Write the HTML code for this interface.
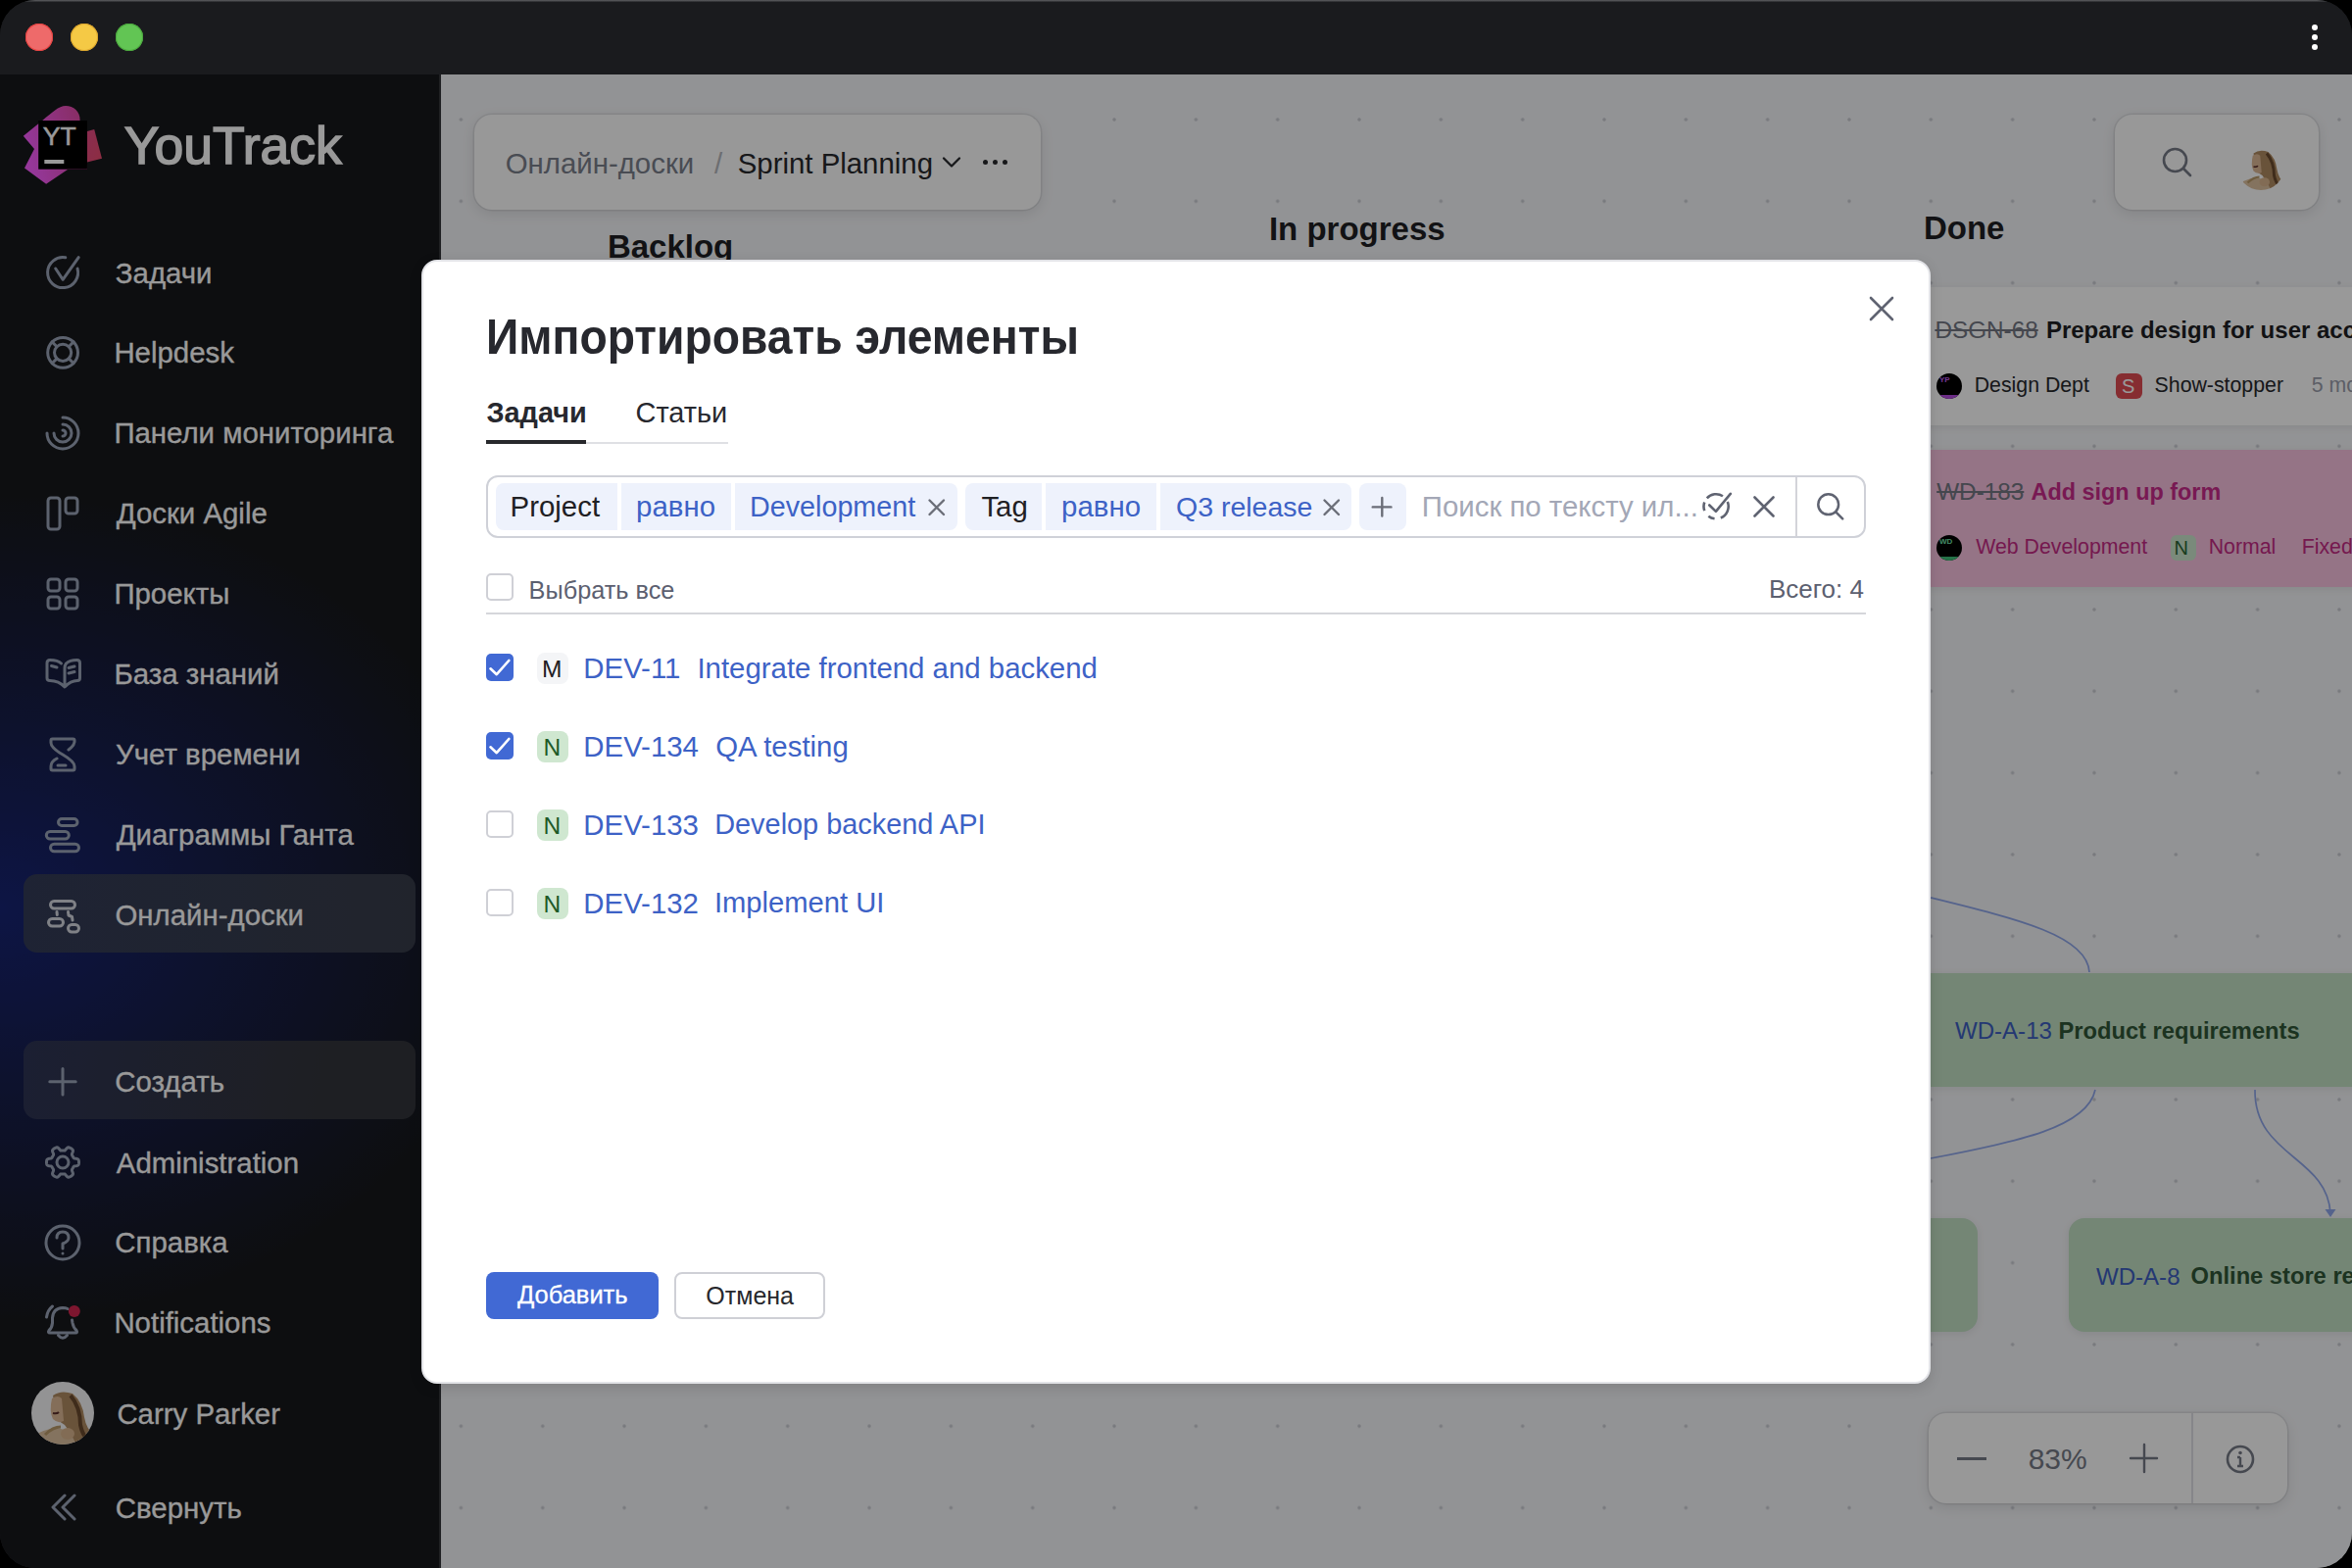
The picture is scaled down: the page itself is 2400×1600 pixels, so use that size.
<!DOCTYPE html>
<html><head><meta charset="utf-8"><style>
html,body{margin:0;padding:0;}
body{width:2400px;height:1600px;overflow:hidden;background:#000;position:relative;font-family:"Liberation Sans",sans-serif;}
.t{position:absolute;white-space:nowrap;line-height:1;}
.b{position:absolute;box-sizing:border-box;}
</style></head><body>
<div style="position:absolute;left:0;top:0;width:2400px;height:1600px;border-radius:36px;overflow:hidden;background:#1a1b1e;">
<div class="b" style="left:0px;top:0px;width:2400px;height:76px;background:#1a1b1e;"></div>
<div class="b" style="left:0px;top:0px;width:2400px;height:2px;background:linear-gradient(#606164,#26272a);"></div>
<div class="b" style="left:26px;top:24px;width:28px;height:28px;border-radius:50%;background:#ee6a6a;box-shadow:inset 0 0 0 1px #e8403f;"></div>
<div class="b" style="left:72px;top:24px;width:28px;height:28px;border-radius:50%;background:#f5c945;box-shadow:inset 0 0 0 1px #dca52c;"></div>
<div class="b" style="left:118px;top:24px;width:28px;height:28px;border-radius:50%;background:#62c554;box-shadow:inset 0 0 0 1px #4aa83d;"></div>
<div class="b" style="left:2359px;top:25px;width:6px;height:6px;border-radius:50%;background:#fff;"></div>
<div class="b" style="left:2359px;top:35px;width:6px;height:6px;border-radius:50%;background:#fff;"></div>
<div class="b" style="left:2359px;top:45px;width:6px;height:6px;border-radius:50%;background:#fff;"></div>
<div class="b" style="left:0px;top:76px;width:448px;height:1524px;background:#17181c;"></div>
<div class="b" style="left:0px;top:76px;width:448px;height:1524px;background:radial-gradient(ellipse 520px 420px at 0px 850px, rgba(22,36,120,0.95), rgba(22,36,120,0.5) 45%, rgba(22,36,120,0) 100%);"></div>
<div class="b" style="left:448px;top:76px;width:2px;height:1524px;background:#35363b;"></div>
<svg class="b" style="left:20px;top:100px;" width="90" height="95" viewBox="0 0 90 95" fill="none">
<defs><linearGradient id="lg1" x1="0" y1="0.3" x2="1" y2="0"><stop offset="0" stop-color="#f85cff"/><stop offset="1" stop-color="#e04a9a"/></linearGradient>
<linearGradient id="lg2" x1="0" y1="0" x2="1" y2="1"><stop offset="0" stop-color="#e64a86"/><stop offset="1" stop-color="#ea4c6e"/></linearGradient></defs>
<path d="M3.8 38.8 L23.5 22.7 C33 15 40 8 47 8 C55 8 62 14 61.6 22.7 L68.9 73 L49 73 L27.1 87.8 L5 71.5 L15 52 Z" fill="url(#lg1)"/>
<path d="M68.9 33.9 L76.2 32.1 L84 61.8 L68.9 65.4 Z" fill="url(#lg2)"/>
<rect x="19.2" y="23" width="49.7" height="49.7" fill="#000"/>
<rect x="25.3" y="63" width="20" height="4" fill="#fff"/>
</svg>
<div class="t" style="left:43.8px;top:125.6px;font-size:26.5px;font-weight:normal;color:#fff;-webkit-text-stroke:0.5px #fff;">YT</div>
<div class="t" style="left:126.7px;top:121.7px;font-size:53.5px;font-weight:normal;color:#fff;-webkit-text-stroke:1.5px #fff;">YouTrack</div>
<div class="b" style="left:24px;top:892px;width:400px;height:80px;background:linear-gradient(90deg,#333b57,#383d4a);border-radius:14px;"></div>
<div class="b" style="left:24px;top:1062px;width:400px;height:80px;background:linear-gradient(100deg,#2e3455,#33353b 75%);border-radius:14px;"></div>
<div class="t" style="left:117.8px;top:263.5px;font-size:29.4px;font-weight:normal;color:#ffffff;-webkit-text-stroke:0.3px #fff;">Задачи</div>
<div class="t" style="left:116.4px;top:345.1px;font-size:29.4px;font-weight:normal;color:#ffffff;-webkit-text-stroke:0.3px #fff;">Helpdesk</div>
<div class="t" style="left:116.4px;top:427.1px;font-size:29.4px;font-weight:normal;color:#ffffff;-webkit-text-stroke:0.3px #fff;">Панели мониторинга</div>
<div class="t" style="left:118.7px;top:509.1px;font-size:29.4px;font-weight:normal;color:#ffffff;-webkit-text-stroke:0.3px #fff;">Доски Agile</div>
<div class="t" style="left:116.4px;top:591.1px;font-size:29.4px;font-weight:normal;color:#ffffff;-webkit-text-stroke:0.3px #fff;">Проекты</div>
<div class="t" style="left:116.4px;top:673.1px;font-size:29.4px;font-weight:normal;color:#ffffff;-webkit-text-stroke:0.3px #fff;">База знаний</div>
<div class="t" style="left:118.1px;top:755.1px;font-size:29.4px;font-weight:normal;color:#ffffff;-webkit-text-stroke:0.3px #fff;">Учет времени</div>
<div class="t" style="left:118.7px;top:837.1px;font-size:29.4px;font-weight:normal;color:#ffffff;-webkit-text-stroke:0.3px #fff;">Диаграммы Ганта</div>
<div class="t" style="left:117.5px;top:919.1px;font-size:29.4px;font-weight:normal;color:#ffffff;-webkit-text-stroke:0.3px #fff;">Онлайн-доски</div>
<div class="t" style="left:117.3px;top:1089.1px;font-size:29.4px;font-weight:normal;color:#ffffff;-webkit-text-stroke:0.3px #fff;">Создать</div>
<div class="t" style="left:118.8px;top:1171.7px;font-size:29.4px;font-weight:normal;color:#ffffff;-webkit-text-stroke:0.3px #fff;">Administration</div>
<div class="t" style="left:117.3px;top:1253.1px;font-size:29.4px;font-weight:normal;color:#ffffff;-webkit-text-stroke:0.3px #fff;">Справка</div>
<div class="t" style="left:116.4px;top:1335.1px;font-size:29.4px;font-weight:normal;color:#ffffff;-webkit-text-stroke:0.3px #fff;">Notifications</div>
<div class="t" style="left:119.4px;top:1428.1px;font-size:29.4px;font-weight:normal;color:#ffffff;-webkit-text-stroke:0.3px #fff;">Carry Parker</div>
<div class="t" style="left:117.8px;top:1523.8px;font-size:29.4px;font-weight:normal;color:#ffffff;-webkit-text-stroke:0.3px #fff;">Свернуть</div>
<svg class="b" style="left:32px;top:1410px" width="64" height="64" viewBox="0 0 64 64"><defs><clipPath id="av1"><circle cx="32" cy="32" r="32"/></clipPath></defs>
<g clip-path="url(#av1)">
<rect x="0" y="0" width="64" height="64" fill="#f6f6f7"/>
<path d="M8 52 Q20 46 30 48 Q40 50 50 56 L58 64 L6 64 Z" fill="#dcc09e"/>
<path d="M22 14 Q30 8 42 12 Q52 20 54 36 Q56 48 64 54 L64 64 L46 64 Q40 52 34 44 L28 40 Q24 28 22 14 Z" fill="#b08a62"/>
<path d="M40 14 Q50 26 50 44 Q52 54 58 60" stroke="#6a4a2e" stroke-width="4" fill="none"/>
<path d="M21 17 Q27 13 31 17 L33 40 Q27 43 22 38 Q18 30 21 17 Z" fill="#dcb894"/>
<path d="M14 54 Q22 46 30 46" stroke="#b99a6a" stroke-width="3" fill="none"/>
<ellipse cx="37" cy="53" rx="7" ry="6" fill="#d9b58e"/>
<path d="M22 32 Q26 33 28 31" stroke="#5a2e2a" stroke-width="2" fill="none"/>
</g></svg>
<svg class="b" style="left:44px;top:258px;" width="40" height="40" viewBox="0 0 40 40" fill="none"><path d="M35.07 16.09 A15.5 15.5 0 1 1 22.79 4.84" stroke="#9aa4b8" stroke-width="3" stroke-linecap="round" stroke-linejoin="round"/><path d="M12.7 16 L20.1 27.3 L36.2 4.7" stroke="#9aa4b8" stroke-width="3" stroke-linecap="round" stroke-linejoin="round"/></svg>
<svg class="b" style="left:44px;top:340px;" width="40" height="40" viewBox="0 0 40 40" fill="none"><circle cx="20.1" cy="19.8" r="15.4" stroke="#9aa4b8" stroke-width="3" stroke-linecap="round" stroke-linejoin="round"/><circle cx="20.1" cy="19.8" r="8.6" stroke="#9aa4b8" stroke-width="3" stroke-linecap="round" stroke-linejoin="round"/><path d="M9.2 8.9 L14 13.7 M31 8.9 L26.2 13.7 M9.2 30.7 L14 25.9 M31 30.7 L26.2 25.9" stroke="#9aa4b8" stroke-width="3" stroke-linecap="round" stroke-linejoin="round"/></svg>
<svg class="b" style="left:44px;top:422px;" width="40" height="40" viewBox="0 0 40 40" fill="none"><path d="M20 4 A16 16 0 1 1 4 20" stroke="#9aa4b8" stroke-width="3" stroke-linecap="round" stroke-linejoin="round"/><path d="M20 11 A9 9 0 1 1 11 20" stroke="#9aa4b8" stroke-width="3" stroke-linecap="round" stroke-linejoin="round"/><path d="M20 17 A3 3 0 0 1 20 23" stroke="#9aa4b8" stroke-width="3" stroke-linecap="round" stroke-linejoin="round"/></svg>
<svg class="b" style="left:44px;top:504px;" width="40" height="40" viewBox="0 0 40 40" fill="none"><rect x="5" y="4" width="12" height="32" rx="3" stroke="#9aa4b8" stroke-width="3" stroke-linecap="round" stroke-linejoin="round"/><rect x="23" y="4" width="12" height="16" rx="3" stroke="#9aa4b8" stroke-width="3" stroke-linecap="round" stroke-linejoin="round"/></svg>
<svg class="b" style="left:44px;top:586px;" width="40" height="40" viewBox="0 0 40 40" fill="none"><rect x="5" y="5" width="12" height="12" rx="3" stroke="#9aa4b8" stroke-width="3" stroke-linecap="round" stroke-linejoin="round"/><rect x="23" y="5" width="12" height="12" rx="3" stroke="#9aa4b8" stroke-width="3" stroke-linecap="round" stroke-linejoin="round"/><rect x="5" y="23" width="12" height="12" rx="3" stroke="#9aa4b8" stroke-width="3" stroke-linecap="round" stroke-linejoin="round"/><rect x="23" y="23" width="12" height="12" rx="3" stroke="#9aa4b8" stroke-width="3" stroke-linecap="round" stroke-linejoin="round"/></svg>
<svg class="b" style="left:44px;top:668px;" width="40" height="40" viewBox="0 0 40 40" fill="none"><path d="M18.5 9 Q15 5.5 7 5.5 Q4 5.5 4 8.5 L4 24 Q4 26.5 7 26.5 Q16 26.5 22 33 Q28 26.5 35 26.5 Q37.5 26.5 37.5 24 L37.5 8.5 Q37.5 5.5 34.5 5.5 Q27 5.5 23.5 9 Q22 11 22 14 L22 32" stroke="#9aa4b8" stroke-width="3" stroke-linecap="round" stroke-linejoin="round"/><path d="M8.5 11.5 L14 13 M26 13.5 L32 12 M26 19 L32 17.5" stroke="#9aa4b8" stroke-width="3" stroke-linecap="round" stroke-linejoin="round"/></svg>
<svg class="b" style="left:44px;top:750px;" width="40" height="40" viewBox="0 0 40 40" fill="none"><path d="M26 15 Q31.5 11 32 7 L32 5.5 Q32 4 30.5 4 L9.5 4 Q8 4 8 5.5 L8 8 Q8 13 20 20 Q32 27 32 32 L32 34.5 Q32 36 30.5 36 L9.5 36 Q8 36 8 34.5 L8 32 Q8 27 14 24" stroke="#9aa4b8" stroke-width="3" stroke-linecap="round" stroke-linejoin="round"/><path d="M15 31 L23 31" stroke="#9aa4b8" stroke-width="3" stroke-linecap="round" stroke-linejoin="round"/></svg>
<svg class="b" style="left:44px;top:832px;" width="40" height="40" viewBox="0 0 40 40" fill="none"><rect x="15.5" y="3.5" width="19.5" height="7" rx="3.5" stroke="#9aa4b8" stroke-width="3" stroke-linecap="round" stroke-linejoin="round"/><rect x="3.3" y="16.5" width="23" height="7.5" rx="3.75" stroke="#9aa4b8" stroke-width="3" stroke-linecap="round" stroke-linejoin="round"/><rect x="7.5" y="29.3" width="29" height="7.5" rx="3.75" stroke="#9aa4b8" stroke-width="3" stroke-linecap="round" stroke-linejoin="round"/></svg>
<svg class="b" style="left:44px;top:914px;" width="40" height="40" viewBox="0 0 40 40" fill="none"><rect x="7.5" y="5.5" width="25" height="7.5" rx="3.75" stroke="#d4d8e0" stroke-width="3" stroke-linecap="round" stroke-linejoin="round"/><rect x="5.5" y="23.5" width="15" height="7.5" rx="3.75" stroke="#d4d8e0" stroke-width="3" stroke-linecap="round" stroke-linejoin="round"/><rect x="25.5" y="29.5" width="11" height="7.5" rx="3.75" stroke="#d4d8e0" stroke-width="3" stroke-linecap="round" stroke-linejoin="round"/><path d="M14 16.5 L14.3 19.5 M25.5 16.5 L26 20 L29.5 21.5 L30 25" stroke="#d4d8e0" stroke-width="3" stroke-linecap="round" stroke-linejoin="round"/></svg>
<svg class="b" style="left:44px;top:1084px;" width="40" height="40" viewBox="0 0 40 40" fill="none"><path d="M20 6.5 L20 33 M6.8 19.8 L33.2 19.8" stroke="#9aa4b8" stroke-width="3" stroke-linecap="round" stroke-linejoin="round"/></svg>
<svg class="b" style="left:44px;top:1166px;" width="40" height="40" viewBox="0 0 40 40" fill="none"><path d="M20.00 8.10 L20.52 8.11 L21.04 8.12 L21.57 8.10 L22.12 7.96 L22.79 7.43 L23.68 6.28 L24.67 5.19 L25.53 4.80 L26.28 4.85 L26.96 5.07 L27.62 5.37 L28.25 5.71 L28.86 6.09 L29.45 6.51 L29.98 6.99 L30.40 7.61 L30.49 8.55 L30.04 9.96 L29.49 11.30 L29.36 12.14 L29.52 12.69 L29.77 13.16 L30.04 13.60 L30.31 14.05 L30.56 14.50 L30.81 14.96 L31.09 15.41 L31.49 15.82 L32.28 16.13 L33.72 16.32 L35.16 16.64 L35.93 17.19 L36.26 17.86 L36.41 18.56 L36.48 19.28 L36.50 20.00 L36.48 20.72 L36.41 21.44 L36.26 22.14 L35.93 22.81 L35.16 23.36 L33.72 23.68 L32.28 23.87 L31.49 24.18 L31.09 24.59 L30.81 25.04 L30.56 25.50 L30.31 25.95 L30.04 26.40 L29.77 26.84 L29.52 27.31 L29.36 27.86 L29.49 28.70 L30.04 30.04 L30.49 31.45 L30.40 32.39 L29.98 33.01 L29.45 33.49 L28.86 33.91 L28.25 34.29 L27.62 34.63 L26.96 34.93 L26.28 35.15 L25.53 35.20 L24.67 34.81 L23.68 33.72 L22.79 32.57 L22.12 32.04 L21.57 31.90 L21.04 31.88 L20.52 31.89 L20.00 31.90 L19.48 31.89 L18.96 31.88 L18.43 31.90 L17.88 32.04 L17.21 32.57 L16.32 33.72 L15.33 34.81 L14.47 35.20 L13.72 35.15 L13.04 34.93 L12.38 34.63 L11.75 34.29 L11.14 33.91 L10.55 33.49 L10.02 33.01 L9.60 32.39 L9.51 31.45 L9.96 30.04 L10.51 28.70 L10.64 27.86 L10.48 27.31 L10.23 26.84 L9.96 26.40 L9.69 25.95 L9.44 25.50 L9.19 25.04 L8.91 24.59 L8.51 24.18 L7.72 23.87 L6.28 23.68 L4.84 23.36 L4.07 22.81 L3.74 22.14 L3.59 21.44 L3.52 20.72 L3.50 20.00 L3.52 19.28 L3.59 18.56 L3.74 17.86 L4.07 17.19 L4.84 16.64 L6.28 16.32 L7.72 16.13 L8.51 15.82 L8.91 15.41 L9.19 14.96 L9.44 14.50 L9.69 14.05 L9.96 13.60 L10.23 13.16 L10.48 12.69 L10.64 12.14 L10.51 11.30 L9.96 9.96 L9.51 8.55 L9.60 7.61 L10.02 6.99 L10.55 6.51 L11.14 6.09 L11.75 5.71 L12.38 5.37 L13.04 5.07 L13.72 4.85 L14.47 4.80 L15.33 5.19 L16.32 6.28 L17.21 7.43 L17.88 7.96 L18.43 8.10 L18.96 8.12 L19.48 8.11 L20.00 8.10 Z" stroke="#9aa4b8" stroke-width="3" stroke-linecap="round" stroke-linejoin="round"/><circle cx="20" cy="20" r="6" stroke="#9aa4b8" stroke-width="3" stroke-linecap="round" stroke-linejoin="round"/></svg>
<svg class="b" style="left:44px;top:1248px;" width="40" height="40" viewBox="0 0 40 40" fill="none"><circle cx="20" cy="20" r="17" stroke="#9aa4b8" stroke-width="3" stroke-linecap="round" stroke-linejoin="round"/><path d="M14 15 Q14 9 20 9 Q26 9 26 15 Q26 19 20 21 L20 26" stroke="#9aa4b8" stroke-width="3" stroke-linecap="round" stroke-linejoin="round"/><circle cx="20" cy="31" r="1.5" fill="#9aa4b8"/></svg>
<svg class="b" style="left:44px;top:1330px;" width="40" height="40" viewBox="0 0 40 40" fill="none"><path d="M9.5 15 Q10 5 20 4.5 Q23 4.5 25 5.5" stroke="#9aa4b8" stroke-width="3" stroke-linecap="round" stroke-linejoin="round"/><path d="M29.5 17 L30 20 Q31 25 34 27.5 Q35.5 30 33 30 L7 30 Q4.5 30 6 27.5 Q9 25 9.5 20 L9.5 15" stroke="#9aa4b8" stroke-width="3" stroke-linecap="round" stroke-linejoin="round"/><path d="M15.5 32.5 Q20 38 24.5 32.5" stroke="#9aa4b8" stroke-width="3" stroke-linecap="round" stroke-linejoin="round"/><path d="M3.5 14 Q4.5 7 9.5 3" stroke="#9aa4b8" stroke-width="3" stroke-linecap="round" stroke-linejoin="round"/><circle cx="31.8" cy="8" r="6" fill="#d1264f"/></svg>
<svg class="b" style="left:44px;top:1518px;" width="40" height="40" viewBox="0 0 40 40" fill="none"><path d="M22 8 L10 20 L22 32 M32 8 L20 20 L32 32" stroke="#9aa4b8" stroke-width="3" stroke-linecap="round" stroke-linejoin="round"/></svg>
<div class="b" style="left:450px;top:76px;width:1950px;height:1524px;background-color:#f4f5f8;background-image:radial-gradient(circle, #c9cbd2 1.2px, transparent 2.2px);background-size:83.333px 83.333px;background-position:-21.27px 4.33px;"></div>
<div class="b" style="left:484px;top:117px;width:578px;height:97px;background:#fdfdfe;border-radius:18px;box-shadow:0 4px 14px rgba(0,0,0,0.10), 0 0 0 1.5px rgba(0,0,0,0.07);"></div>
<div class="t" style="left:515.7px;top:151.9px;font-size:29.4px;font-weight:normal;color:#7a7f8b;">Онлайн-доски</div>
<div class="t" style="left:729.0px;top:151.9px;font-size:29.4px;font-weight:normal;color:#b5b7bc;">/</div>
<div class="t" style="left:752.7px;top:151.9px;font-size:29.4px;font-weight:normal;color:#27282c;">Sprint Planning</div>
<svg class="b" style="left:958px;top:155px;" width="26" height="20" viewBox="0 0 26 20" fill="none"><path d="M5 6.5 L13 14.5 L21 6.5" stroke="#27282c" stroke-width="2.3" stroke-linecap="round" stroke-linejoin="round"/></svg>
<div class="b" style="left:1002.9px;top:163px;width:5.2px;height:5.2px;border-radius:50%;background:#27282c;"></div>
<div class="b" style="left:1012.9px;top:163px;width:5.2px;height:5.2px;border-radius:50%;background:#27282c;"></div>
<div class="b" style="left:1022.9px;top:163px;width:5.2px;height:5.2px;border-radius:50%;background:#27282c;"></div>
<div class="b" style="left:2158px;top:117px;width:208px;height:97px;background:#fdfdfe;border-radius:18px;box-shadow:0 4px 14px rgba(0,0,0,0.10), 0 0 0 1.5px rgba(0,0,0,0.07);"></div>
<svg class="b" style="left:2200px;top:145px;" width="44" height="44" viewBox="0 0 44 44" fill="none"><circle cx="19.5" cy="18.5" r="11.5" stroke="#767a86" stroke-width="2.6"/><path d="M28 27 L35 34" stroke="#767a86" stroke-width="2.6" stroke-linecap="round"/></svg>
<svg class="b" style="left:2283px;top:146px" width="48" height="48" viewBox="0 0 64 64"><defs><clipPath id="av2"><circle cx="32" cy="32" r="32"/></clipPath></defs>
<g clip-path="url(#av2)">
<rect x="0" y="0" width="64" height="64" fill="#fdfdfe"/>
<path d="M8 52 Q20 46 30 48 Q40 50 50 56 L58 64 L6 64 Z" fill="#dcc09e"/>
<path d="M22 14 Q30 8 42 12 Q52 20 54 36 Q56 48 64 54 L64 64 L46 64 Q40 52 34 44 L28 40 Q24 28 22 14 Z" fill="#b08a62"/>
<path d="M40 14 Q50 26 50 44 Q52 54 58 60" stroke="#6a4a2e" stroke-width="4" fill="none"/>
<path d="M21 17 Q27 13 31 17 L33 40 Q27 43 22 38 Q18 30 21 17 Z" fill="#dcb894"/>
<path d="M14 54 Q22 46 30 46" stroke="#b99a6a" stroke-width="3" fill="none"/>
<ellipse cx="37" cy="53" rx="7" ry="6" fill="#d9b58e"/>
<path d="M22 32 Q26 33 28 31" stroke="#5a2e2a" stroke-width="2" fill="none"/>
</g></svg>
<div class="t" style="left:619.9px;top:235.1px;font-size:33px;font-weight:bold;color:#1e1f23;">Backlog</div>
<div class="t" style="left:1294.9px;top:217.1px;font-size:33px;font-weight:bold;color:#1e1f23;">In progress</div>
<div class="t" style="left:1962.9px;top:215.6px;font-size:33px;font-weight:bold;color:#1e1f23;">Done</div>
<div class="b" style="left:1940px;top:293px;width:520px;height:141px;background:#ffffff;border-radius:16px;box-shadow:0 2px 8px rgba(0,0,0,0.08);"></div>
<div class="t" style="left:1974.4px;top:324.9px;font-size:24.3px;font-weight:normal;color:#737783;text-decoration:line-through;">DSGN-68</div>
<div class="t" style="left:2087.9px;top:325.2px;font-size:24px;font-weight:bold;color:#1e1f23;">Prepare design for user account</div>
<div class="b" style="left:1976px;top:381px;width:26px;height:26px;border-radius:50%;background:#000;overflow:hidden;"><div class="b" style="left:0;top:22px;width:26px;height:4px;background:#b44be0"></div><div class="t" style="left:3px;top:3px;font-size:8px;font-weight:bold;color:#c05ef0;">YP</div></div>
<div class="t" style="left:2014.7px;top:383.4px;font-size:21.3px;font-weight:normal;color:#27282c;">Design Dept</div>
<div class="b" style="left:2159px;top:381px;width:27px;height:26px;background:#e04c52;border-radius:6px;"></div>
<div class="t" style="left:2165.1px;top:383.6px;font-size:20px;font-weight:normal;color:#fff;">S</div>
<div class="t" style="left:2198.6px;top:383.4px;font-size:21.3px;font-weight:normal;color:#27282c;">Show-stopper</div>
<div class="t" style="left:2358.8px;top:383.4px;font-size:21.3px;font-weight:normal;color:#9a9dab;">5 mo</div>
<div class="b" style="left:1940px;top:459px;width:520px;height:140px;background:#f8c2df;border-radius:16px;box-shadow:0 2px 8px rgba(0,0,0,0.08);"></div>
<div class="t" style="left:1976.2px;top:489.7px;font-size:24.3px;font-weight:normal;color:#737783;text-decoration:line-through;">WD-183</div>
<div class="t" style="left:2072.6px;top:490.5px;font-size:23.4px;font-weight:bold;color:#c92b8a;">Add sign up form</div>
<div class="b" style="left:1976px;top:546px;width:26px;height:26px;border-radius:50%;background:#000;overflow:hidden;"><div class="b" style="left:0;top:22px;width:26px;height:4px;background:#3fbf78"></div><div class="t" style="left:3px;top:3px;font-size:8px;font-weight:bold;color:#6fe0a8;">WD</div></div>
<div class="t" style="left:2016.3px;top:548.3px;font-size:21.3px;font-weight:normal;color:#c42a84;">Web Development</div>
<div class="b" style="left:2215px;top:546px;width:26px;height:26px;background:#cbe6cd;border-radius:6px;"></div>
<div class="t" style="left:2218.4px;top:548.6px;font-size:20px;font-weight:normal;color:#2b6434;">N</div>
<div class="t" style="left:2253.7px;top:548.3px;font-size:21.3px;font-weight:normal;color:#c42a84;">Normal</div>
<div class="t" style="left:2348.7px;top:548.3px;font-size:21.3px;font-weight:normal;color:#c42a84;">Fixed</div>
<div class="b" style="left:1940px;top:993px;width:520px;height:116px;background:#c1dfc4;border-radius:16px;box-shadow:0 2px 8px rgba(0,0,0,0.08);"></div>
<div class="t" style="left:1994.9px;top:1040.2px;font-size:24.1px;font-weight:normal;color:#3d5ec0;">WD-A-13</div>
<div class="t" style="left:2100.5px;top:1040.5px;font-size:23.7px;font-weight:bold;color:#2f5536;">Product requirements</div>
<div class="b" style="left:1900px;top:1243px;width:118px;height:116px;background:#c1dfc4;border-radius:16px;box-shadow:0 2px 8px rgba(0,0,0,0.08);"></div>
<div class="b" style="left:2111px;top:1243px;width:339px;height:116px;background:#c1dfc4;border-radius:16px;box-shadow:0 2px 8px rgba(0,0,0,0.08);"></div>
<div class="t" style="left:2138.9px;top:1290.6px;font-size:24.1px;font-weight:normal;color:#3d5ec0;">WD-A-8</div>
<div class="t" style="left:2235.6px;top:1290.9px;font-size:23.7px;font-weight:bold;color:#2f5536;">Online store requirements</div>
<svg class="b" style="left:1950px;top:880px;" width="450" height="380" viewBox="0 0 450 380" fill="none">
<path d="M20 36 C110 58 180 75 182 112" stroke="#8ea6ea" stroke-width="1.7"/>
<path d="M188 232 C180 270 110 285 20 302" stroke="#8ea6ea" stroke-width="1.7"/>
<path d="M351 232 C350 300 425 300 428 358" stroke="#8ea6ea" stroke-width="1.7"/>
<path d="M422.5 354 L428 362 L433.5 354 Z" fill="#8ea6ea"/>
</svg>
<div class="b" style="left:1968px;top:1442px;width:366px;height:92px;background:#fdfdfe;border-radius:18px;box-shadow:0 4px 14px rgba(0,0,0,0.10), 0 0 0 1.5px rgba(0,0,0,0.07);"></div>
<div class="b" style="left:2236px;top:1442px;width:2px;height:92px;background:#dfe0e4;"></div>
<div class="b" style="left:1997px;top:1487px;width:30px;height:2.5px;background:#767a86;"></div>
<div class="t" style="left:2069.7px;top:1473.6px;font-size:30px;font-weight:normal;color:#767a86;">83%</div>
<svg class="b" style="left:2170px;top:1470px;" width="36" height="36" viewBox="0 0 36 36" fill="none"><path d="M18 4 L18 32 M4 18 L31 18" stroke="#767a86" stroke-width="2.4" stroke-linecap="round"/></svg>
<svg class="b" style="left:2266px;top:1474px;" width="40" height="32" viewBox="0 0 40 32" fill="none"><circle cx="20" cy="15" r="13" stroke="#767a86" stroke-width="2.6"/><path d="M20 13 L20 22 M17 13 L20 13 M17 22 L23 22" stroke="#767a86" stroke-width="2.4"/><circle cx="20" cy="8.5" r="1.8" fill="#767a86"/></svg>
<div class="b" style="left:0px;top:76px;width:2400px;height:1524px;background:rgba(0,0,0,0.4);"></div>
<div class="b" style="left:430px;top:265px;width:1540px;height:1147px;background:#fff;border:2px solid #e3e4e8;border-radius:16px;box-shadow:0 4px 14px rgba(0,0,0,0.12);"></div>
<svg class="b" style="left:1905px;top:300px;" width="30" height="30" viewBox="0 0 30 30" fill="none"><path d="M4 4 L26 26 M26 4 L4 26" stroke="#5f6371" stroke-width="2.6" stroke-linecap="round"/></svg>
<div class="t" style="left:496.0px;top:318.7px;font-size:50.2px;font-weight:bold;color:#27282e;transform:scaleX(0.922);transform-origin:0 0;">Импортировать элементы</div>
<div class="t" style="left:496.4px;top:406.8px;font-size:28.9px;font-weight:bold;color:#27282e;">Задачи</div>
<div class="t" style="left:648.6px;top:406.8px;font-size:28.9px;font-weight:normal;color:#27282e;">Статьи</div>
<div class="b" style="left:598px;top:451px;width:145px;height:2px;background:#dfe0e4;"></div>
<div class="b" style="left:496px;top:449px;width:102px;height:4px;background:#27282c;"></div>
<div class="b" style="left:496px;top:485px;width:1408px;height:64px;border:2px solid #cfd1d8;border-radius:12px;"></div>
<div class="b" style="left:506px;top:493px;width:124px;height:48px;background:#eef2fc;border-radius:8px 0 0 8px;"></div>
<div class="b" style="left:634px;top:493px;width:112px;height:48px;background:#eef2fc;"></div>
<div class="b" style="left:750px;top:493px;width:227px;height:48px;background:#eef2fc;border-radius:0 8px 8px 0;"></div>
<div class="b" style="left:985px;top:493px;width:78px;height:48px;background:#eef2fc;border-radius:8px 0 0 8px;"></div>
<div class="b" style="left:1067px;top:493px;width:113px;height:48px;background:#eef2fc;"></div>
<div class="b" style="left:1184px;top:493px;width:195px;height:48px;background:#eef2fc;border-radius:0 8px 8px 0;"></div>
<div class="b" style="left:1387px;top:493px;width:48px;height:48px;background:#eef2fc;border-radius:8px;"></div>
<div class="t" style="left:520.6px;top:501.8px;font-size:29.4px;font-weight:normal;color:#1f2023;">Project</div>
<div class="t" style="left:649.1px;top:501.8px;font-size:29.4px;font-weight:normal;color:#3d62c6;">равно</div>
<div class="t" style="left:765.1px;top:503.1px;font-size:28.7px;font-weight:normal;color:#3d62c6;">Development</div>
<div class="t" style="left:1001.4px;top:501.8px;font-size:29.4px;font-weight:normal;color:#1f2023;">Tag</div>
<div class="t" style="left:1083.1px;top:501.8px;font-size:29.4px;font-weight:normal;color:#3d62c6;">равно</div>
<div class="t" style="left:1200.0px;top:502.6px;font-size:28.5px;font-weight:normal;color:#3d62c6;">Q3 release</div>
<svg class="b" style="left:946px;top:508px;" width="20" height="20" viewBox="0 0 20 20" fill="none"><path d="M2.5 2.5 L17 17 M17 2.5 L2.5 17" stroke="#6b6e78" stroke-width="2.4" stroke-linecap="round"/></svg>
<svg class="b" style="left:1349px;top:508px;" width="20" height="20" viewBox="0 0 20 20" fill="none"><path d="M2.5 2.5 L17 17 M17 2.5 L2.5 17" stroke="#6b6e78" stroke-width="2.4" stroke-linecap="round"/></svg>
<svg class="b" style="left:1397px;top:505px;" width="26" height="26" viewBox="0 0 26 26" fill="none"><path d="M13.3 3 L13.3 21.5 M3.7 12.4 L22.5 12.4" stroke="#6b6e78" stroke-width="2.4" stroke-linecap="round"/></svg>
<div class="t" style="left:1450.8px;top:501.8px;font-size:29.4px;font-weight:normal;color:#a3a7b6;">Поиск по тексту ил...</div>
<svg class="b" style="left:1735px;top:500px;" width="34" height="34" viewBox="0 0 34 34" fill="none"><path d="M6.74 8.37 A12.6 12.6 0 0 1 22.96 6.23 M4.26 21.11 A12.6 12.6 0 0 1 4.26 12.49 M14.56 29.31 A12.6 12.6 0 0 1 8.34 26.73 M27.78 12.08 A12.6 12.6 0 0 1 20.82 28.48" stroke="#5f6371" stroke-width="2.6" stroke-linecap="butt"/><path d="M9.3 15.5 L15.9 21.9 L30.8 3.8" stroke="#5f6371" stroke-width="2.6" stroke-linecap="round" stroke-linejoin="round"/></svg>
<svg class="b" style="left:1786px;top:504px;" width="28" height="28" viewBox="0 0 28 28" fill="none"><path d="M4.5 3.5 L23.5 22.5 M23.5 3.5 L4.5 22.5" stroke="#5f6371" stroke-width="2.6" stroke-linecap="round"/></svg>
<div class="b" style="left:1832px;top:487px;width:2px;height:60px;background:#d3d4d9;"></div>
<svg class="b" style="left:1850px;top:500px;" width="36" height="34" viewBox="0 0 36 34" fill="none"><circle cx="15.7" cy="14.7" r="10.4" stroke="#5f6371" stroke-width="2.5"/><path d="M23.2 22.4 L30.2 29.4" stroke="#5f6371" stroke-width="2.6" stroke-linecap="round"/></svg>
<div class="b" style="left:496px;top:585px;width:28px;height:28px;border:2px solid #cfd0d6;border-radius:5px;"></div>
<div class="t" style="left:539.6px;top:589.6px;font-size:25.3px;font-weight:normal;color:#5c6070;">Выбрать все</div>
<div class="t" style="left:1804.9px;top:588.2px;font-size:26px;font-weight:normal;color:#5c6070;">Всего: 4</div>
<div class="b" style="left:496px;top:625px;width:1408px;height:2px;background:#d5d6db;"></div>
<div class="b" style="left:496px;top:667px;width:28px;height:28px;background:#4169d4;border-radius:5px;"></div>
<svg class="b" style="left:496px;top:667px;" width="28" height="28" viewBox="0 0 28 28" fill="none"><path d="M4.5 15.3 L10.8 21.2 L23.3 7" stroke="#fff" stroke-width="2.6" stroke-linecap="round" stroke-linejoin="round"/></svg>
<div class="b" style="left:548px;top:666px;width:32px;height:32px;background:#f4f5f7;border-radius:8px;"></div>
<div class="t" style="left:553.0px;top:670.8px;font-size:24.5px;font-weight:normal;color:#1f2023;">M</div>
<div class="t" style="left:595.3px;top:666.5px;font-size:29.4px;font-weight:normal;color:#3d62c6;">DEV-11</div>
<div class="t" style="left:711.4px;top:666.5px;font-size:29.4px;font-weight:normal;color:#3d62c6;">Integrate frontend and backend</div>
<div class="b" style="left:496px;top:747px;width:28px;height:28px;background:#4169d4;border-radius:5px;"></div>
<svg class="b" style="left:496px;top:747px;" width="28" height="28" viewBox="0 0 28 28" fill="none"><path d="M4.5 15.3 L10.8 21.2 L23.3 7" stroke="#fff" stroke-width="2.6" stroke-linecap="round" stroke-linejoin="round"/></svg>
<div class="b" style="left:548px;top:746px;width:32px;height:32px;background:#cfe7d0;border-radius:8px;"></div>
<div class="t" style="left:554.5px;top:750.8px;font-size:24.5px;font-weight:normal;color:#1e5a28;">N</div>
<div class="t" style="left:595.3px;top:746.5px;font-size:29.4px;font-weight:normal;color:#3d62c6;">DEV-134</div>
<div class="t" style="left:730.2px;top:746.5px;font-size:29.4px;font-weight:normal;color:#3d62c6;">QA testing</div>
<div class="b" style="left:496px;top:827px;width:28px;height:28px;border:2px solid #cfd0d6;border-radius:5px;"></div>
<div class="b" style="left:548px;top:826px;width:32px;height:32px;background:#cfe7d0;border-radius:8px;"></div>
<div class="t" style="left:554.5px;top:830.8px;font-size:24.5px;font-weight:normal;color:#1e5a28;">N</div>
<div class="t" style="left:595.3px;top:826.5px;font-size:29.4px;font-weight:normal;color:#3d62c6;">DEV-133</div>
<div class="t" style="left:729.2px;top:826.9px;font-size:28.9px;font-weight:normal;color:#3d62c6;">Develop backend API</div>
<div class="b" style="left:496px;top:907px;width:28px;height:28px;border:2px solid #cfd0d6;border-radius:5px;"></div>
<div class="b" style="left:548px;top:906px;width:32px;height:32px;background:#cfe7d0;border-radius:8px;"></div>
<div class="t" style="left:554.5px;top:910.8px;font-size:24.5px;font-weight:normal;color:#1e5a28;">N</div>
<div class="t" style="left:595.3px;top:906.5px;font-size:29.4px;font-weight:normal;color:#3d62c6;">DEV-132</div>
<div class="t" style="left:728.9px;top:906.7px;font-size:29.2px;font-weight:normal;color:#3d62c6;">Implement UI</div>
<div class="b" style="left:496px;top:1298px;width:176px;height:48px;background:#4169d4;border-radius:8px;"></div>
<div class="t" style="left:527.9px;top:1309.4px;font-size:25.5px;font-weight:normal;color:#fff;-webkit-text-stroke:0.3px #fff;">Добавить</div>
<div class="b" style="left:688px;top:1298px;width:154px;height:48px;border:2px solid #cfd0d6;border-radius:8px;"></div>
<div class="t" style="left:720.3px;top:1309.8px;font-size:25px;font-weight:normal;color:#27282c;">Отмена</div>
</div>
</body></html>
